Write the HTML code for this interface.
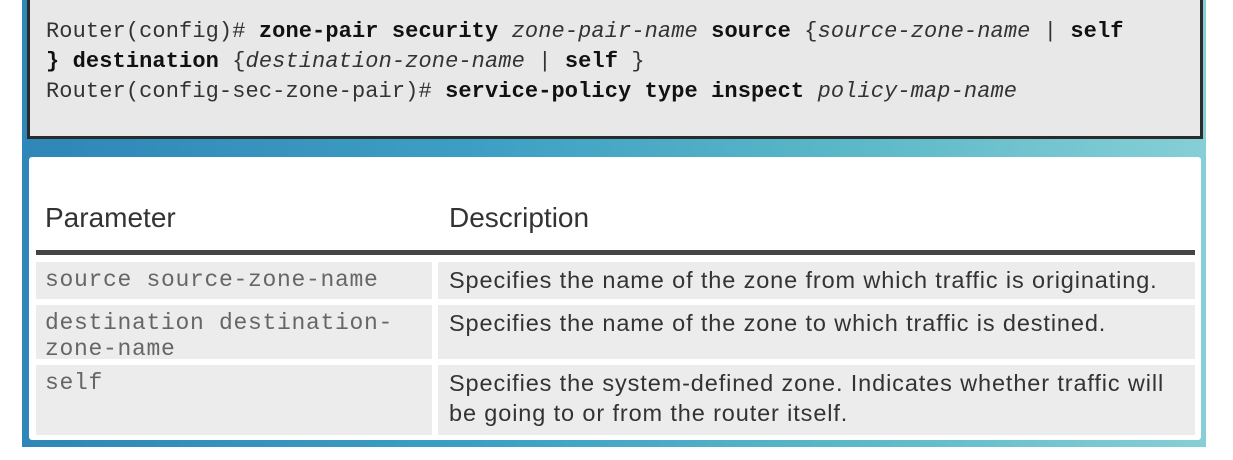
<!DOCTYPE html>
<html><head><style>
body{margin:0;width:1233px;height:460px;background:#fff;position:relative;overflow:hidden;font-family:"Liberation Sans",sans-serif}
.bg{position:absolute;left:22px;top:0;width:1184px;height:447px;background:linear-gradient(90deg,#2f86b8 0%,#3ea0c4 40%,#5bb8c8 70%,#86cfd6 100%)}
.code{position:absolute;left:27px;top:0;width:1170px;height:136px;background:#e9e8e8;border:3px solid #2b2b2b;border-top:none;box-sizing:content-box}
.code pre{margin:0;position:absolute;left:16px;top:17px;font-family:"Liberation Mono",monospace;font-size:22px;line-height:30px;color:#333;letter-spacing:0.1px}
.code b{color:#111}
.card{position:absolute;left:29px;top:157px;width:1172px;height:283px;background:#fff;border-radius:3px}
.h{position:absolute;top:202px;font-size:28px;color:#333}
.line{position:absolute;left:36px;top:250px;width:1159px;height:5px;background:#444}
.c{position:absolute;background:#ececec;box-sizing:border-box}
.m{font-family:"Liberation Mono",monospace;font-size:23px;color:#666;padding:5px 9px;line-height:26px;letter-spacing:0.7px}
.s{font-size:23.5px;color:#333;padding:6px 11px;line-height:30px;letter-spacing:0.88px;white-space:nowrap}
</style></head><body>
<div class="bg"></div>
<div class="code"><pre>Router(config)# <b>zone-pair security</b> <i>zone-pair-name</i> <b>source</b> {<i>source-zone-name</i> | <b>self</b>
<b>} destination</b> {<i>destination-zone-name</i> | <b>self</b> }
Router(config-sec-zone-pair)# <b>service-policy type inspect</b> <i>policy-map-name</i></pre></div>
<div class="card"></div>
<div class="h" style="left:45px">Parameter</div>
<div class="h" style="left:449px">Description</div>
<div class="line"></div>
<div class="c m" style="left:36px;top:262px;width:396px;height:37px">source source-zone-name</div>
<div class="c s" style="left:438px;top:262px;width:757px;height:37px;padding-top:3px">Specifies the name of the zone from which traffic is originating.</div>
<div class="c m" style="left:36px;top:305px;width:396px;height:54px">destination destination-<br>zone-name</div>
<div class="c s" style="left:438px;top:305px;width:757px;height:54px;padding-top:3px">Specifies the name of the zone to which traffic is destined.</div>
<div class="c m" style="left:36px;top:365px;width:396px;height:70px">self</div>
<div class="c s" style="left:438px;top:365px;width:757px;height:70px;padding-top:3px">Specifies the system-defined zone. Indicates whether traffic will<br>be going to or from the router itself.</div>
</body></html>
